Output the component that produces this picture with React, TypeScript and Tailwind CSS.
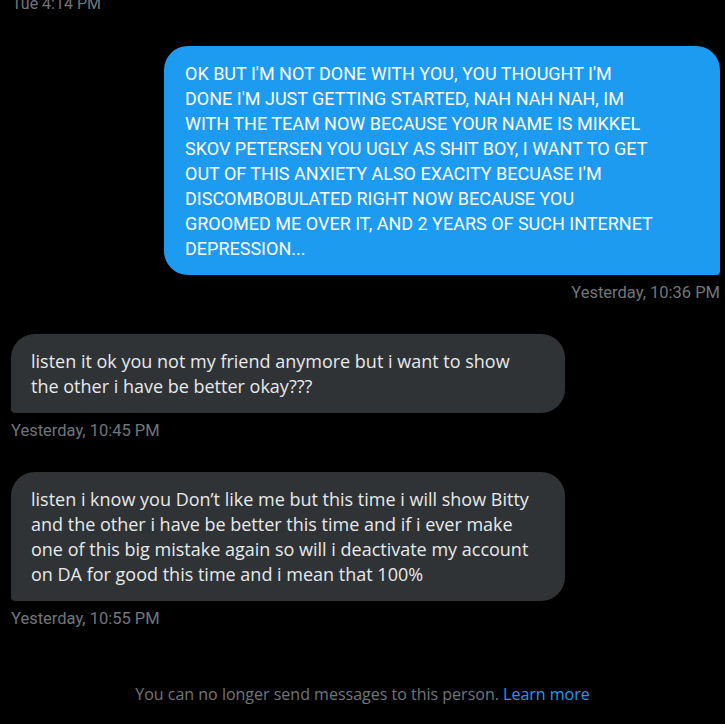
import React from "react";

const sent = [
  "OK BUT I'M NOT DONE WITH YOU, YOU THOUGHT I'M",
  "DONE I'M JUST GETTING STARTED, NAH NAH NAH, IM",
  "WITH THE TEAM NOW BECAUSE YOUR NAME IS MIKKEL",
  "SKOV PETERSEN YOU UGLY AS SHIT BOY, I WANT TO GET",
  "OUT OF THIS ANXIETY ALSO EXACITY BECUASE I'M",
  "DISCOMBOBULATED RIGHT NOW BECAUSE YOU",
  "GROOMED ME OVER IT, AND 2 YEARS OF SUCH INTERNET",
  "DEPRESSION...",
];

const received = [
  {
    lines: [
      "listen it ok you not my friend anymore but i want to show",
      "the other i have be better okay???",
    ],
    time: "Yesterday, 10:45 PM",
  },
  {
    lines: [
      "listen i know you Don’t like me but this time i will show Bitty",
      "and the other i have be better this time and if i ever make",
      "one of this big mistake again so will i deactivate my account",
      "on DA for good this time and i mean that 100%",
    ],
    time: "Yesterday, 10:55 PM",
  },
];

function Lines({ lines }: { lines: string[] }) {
  return (
    <>
      {lines.map((l, i) => (
        <span key={i} className="block whitespace-nowrap">
          {l}
        </span>
      ))}
    </>
  );
}

export default function App() {
  return (
    <div className="w-[725px] h-[724px] bg-black overflow-hidden font-['Roboto',sans-serif] flex flex-col">
      {/* older timestamp, scrolled half off */}
      <div className="-mt-[5px] pl-[12px] text-[16px] leading-[18px] text-[#71767b]">Tue 4:14 PM</div>

      {/* sent message */}
      <div className="mt-[33px] flex flex-col items-end pr-[5px]">
        <div className="w-[556px] bg-[#1d9bf0] text-white rounded-[24px] rounded-br-[4px] pl-[21px] pr-[8px] pt-[15px] pb-[14px] text-[18px] leading-[25px]">
          <Lines lines={sent} />
        </div>
        <div className="mt-[8px] text-[16.5px] leading-[20px] text-[#71767b]">Yesterday, 10:36 PM</div>
      </div>

      {/* received messages */}
      <div className="mt-[31px] flex flex-col gap-[31px] pl-[11px]">
        {received.map((m, i) => (
          <div key={i} className="flex flex-col items-start">
            <div className="w-[554px] bg-[#2f3336] text-[#e7e9ea] rounded-[24px] rounded-bl-[4px] pl-[20px] pr-[8px] pt-[15px] pb-[14px] text-[18px] leading-[25px] font-['Open_Sans',sans-serif]">
              <Lines lines={m.lines} />
            </div>
            <div className="mt-[8px] text-[16.5px] leading-[20px] text-[#71767b]">{m.time}</div>
          </div>
        ))}
      </div>

      {/* footer */}
      <div className="mt-[55px] text-center text-[16px] leading-[20px] text-[#71767b] font-['Open_Sans',sans-serif]">
        You can no longer send messages to this person.{" "}
        <span className="text-[#1d9bf0]">Learn more</span>
      </div>
    </div>
  );
}
